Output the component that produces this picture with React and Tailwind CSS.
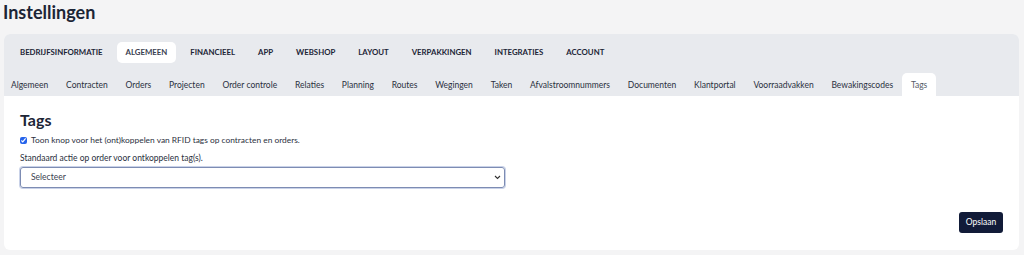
import React from "react";

const topTabs = ["BEDRIJFSINFORMATIE","ALGEMEEN","FINANCIEEL","APP","WEBSHOP","LAYOUT","VERPAKKINGEN","INTEGRATIES","ACCOUNT"];
const subTabs = ["Algemeen","Contracten","Orders","Projecten","Order controle","Relaties","Planning","Routes","Wegingen","Taken","Afvalstroomnummers","Documenten","Klantportal","Voorraadvakken","Bewakingscodes","Tags"];

export default function App() {
  return (
    <div className="w-[1024px] h-[255px] bg-[#f4f4f5] text-[#1e2433] overflow-hidden whitespace-nowrap" style={{fontFamily: "Lato, 'Noto Sans', sans-serif"}}>
      <h1 className="pl-[3px] pt-[1px] h-[34px] text-[18px] font-bold leading-[22px] text-[#1c2536]">Instellingen</h1>
      <div className="mx-[4px] w-[1015px] h-[216px] rounded-[6px] bg-white overflow-hidden flex flex-col">
        <div className="bg-[#e8eaee] pl-[7px] pt-[8px]">
          <div className="flex items-center gap-[5px] h-[21px]">
            {topTabs.map((t) => (
              <div key={t} className={`h-[21px] px-[9px] flex items-center rounded-[5px] text-[7.8px] font-bold ${t === "ALGEMEEN" ? "bg-white text-[#3a4150]" : "text-[#1c2536]"}`}>{t}</div>
            ))}
          </div>
          <div className="flex items-end mt-[10px] h-[23px] -ml-[7px]">
            {subTabs.map((t, i) => (
              <div key={t} className={`h-[23px] ${i === 0 ? "pl-[7px] pr-[8.9px]" : "px-[8.9px]"} pt-[1px] flex items-center text-[8.5px] rounded-t-[5px] ${t === "Tags" ? "bg-white text-[#555b66]" : "text-[#2a3040]"}`}>{t}</div>
            ))}
          </div>
        </div>
        <div className="flex-1 flex flex-col px-[16px] pt-[15px]">
          <div className="text-[16px] font-bold leading-[18px] text-[#1c2536]">Tags</div>
          <label className="flex items-center gap-[4px] mt-[5px] h-[12px] text-[8.4px] text-[#2a3040]">
            <input type="checkbox" defaultChecked className="w-[7px] h-[7px] m-0 accent-[#2563eb]" />
            <span>Toon knop voor het (ont)koppelen van RFID tags op contracten en orders.</span>
          </label>
          <div className="mt-[6px] h-[12px] leading-[12px] text-[8.5px] text-[#2a3040]">Standaard actie op order voor ontkoppelen tag(s).</div>
          <div className="mt-[3px] w-[485px] h-[21px] rounded-[3px] border border-[#7d8cb3] shadow-[0_0_0_1px_#c9d2e8] flex items-center justify-between pl-[10px] pr-[3px] text-[8.5px] text-[#3a4150]">
            <span>Selecteer</span>
            <svg width="7" height="5" viewBox="0 0 7 5"><path d="M1 1l2.5 2.5L6 1" fill="none" stroke="#333" strokeWidth="1.1"/></svg>
          </div>
          <div className="flex justify-end mt-[24px]">
            <button className="h-[21px] w-[44px] rounded-[3px] bg-[#111b38] text-white text-[8.5px]">Opslaan</button>
          </div>
        </div>
      </div>
    </div>
  );
}
